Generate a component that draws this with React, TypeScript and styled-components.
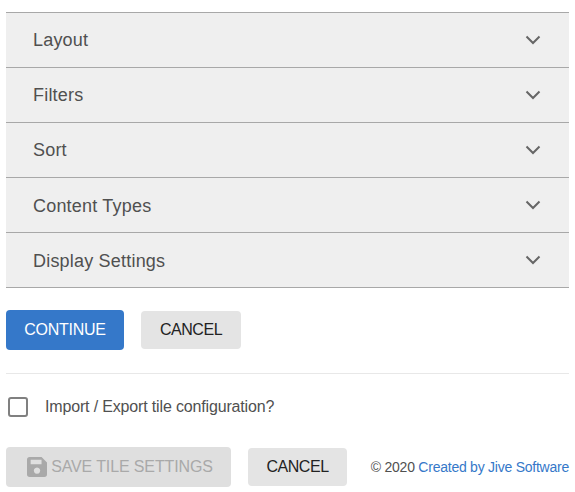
import React from "react";
import styled, { createGlobalStyle } from "styled-components";

const Global = createGlobalStyle`
  html, body { margin: 0; padding: 0; background: #fff; }
  body { font-family: "Liberation Sans", Arial, sans-serif; }
`;

const Page = styled.div`
  width: 563px;
  padding: 12px 6px 0;
`;

const Accordion = styled.div`
  display: flex;
  flex-direction: column;
  border-top: 1px solid #a8a8a8;
`;

const Row = styled.div<{ $low?: boolean }>`
  height: 55px;
  box-sizing: border-box;
  border-bottom: 1px solid #a8a8a8;
  background: #efefef;
  display: flex;
  align-items: center;
  justify-content: space-between;
  padding: ${(p) => (p.$low ? "2px" : "0")} 28px 0 27px;
  font-size: 18px;
  letter-spacing: 0.2px;
  color: #505050;
`;

const Chevron = styled.svg<{ $low?: boolean }>`
  width: 16px;
  height: 10px;
  margin-top: ${(p) => (p.$low ? "-2px" : "0")};
  fill: none;
  stroke: #666;
  stroke-width: 2;
`;

const Actions = styled.div`
  display: flex;
  align-items: center;
  gap: 17px;
  margin-top: 22px;
  padding-bottom: 23px;
  border-bottom: 1px solid #e8e8e8;
`;

const Button = styled.button`
  box-sizing: border-box;
  border: none;
  border-radius: 4px;
  padding: 0;
  font-family: inherit;
  font-size: 16px;
  display: flex;
  align-items: center;
  justify-content: center;
`;

const Primary = styled(Button)`
  width: 118px;
  height: 40px;
  background: #3578c9;
  color: #fff;
  letter-spacing: -0.25px;
`;

const Secondary = styled(Button)<{ $width: number }>`
  width: ${(p) => p.$width}px;
  height: 38px;
  background: #e4e4e4;
  color: #222;
  letter-spacing: -0.45px;
`;

const Disabled = styled(Button)`
  width: 225px;
  height: 40px;
  gap: 4px;
  padding-left: 3px;
  background: #dfdfdf;
  color: #a9a9a9;
  letter-spacing: -0.12px;
`;

const CheckRow = styled.label`
  display: flex;
  align-items: center;
  gap: 17px;
  margin-top: 23px;
  padding-left: 2px;
  font-size: 16px;
  letter-spacing: -0.16px;
  color: #505050;
`;

const Box = styled.span`
  box-sizing: border-box;
  width: 20px;
  height: 20px;
  border: 2.5px solid #808080;
  border-radius: 3px;
`;

const Footer = styled.div`
  display: flex;
  align-items: center;
  margin-top: 30px;
`;

const FooterCancel = styled(Secondary)`
  margin-left: 17px;
`;

const Copy = styled.div`
  margin-left: auto;
  font-size: 14px;
  letter-spacing: -0.24px;
  color: #505050;
  white-space: nowrap;
`;

const Link = styled.a`
  color: #3578c9;
  text-decoration: none;
`;

const SaveIcon = styled.svg`
  width: 20px;
  height: 20px;
  fill: #a9a9a9;
`;

const items = ["Layout", "Filters", "Sort", "Content Types", "Display Settings"];

export default function App() {
  return (
    <Page>
      <Global />
      <Accordion>
        {items.map((t, i) => (
          <Row key={t} $low={i > 2}>
            <span>{t}</span>
            <Chevron viewBox="0 0 16 10" $low={i > 2}>
              <path d="M1.5 1.5 L8 8 L14.5 1.5" />
            </Chevron>
          </Row>
        ))}
      </Accordion>
      <Actions>
        <Primary>CONTINUE</Primary>
        <Secondary $width={100}>CANCEL</Secondary>
      </Actions>
      <CheckRow>
        <Box />
        Import / Export tile configuration?
      </CheckRow>
      <Footer>
        <Disabled>
          <SaveIcon viewBox="0 0 22 22">
            <path fillRule="evenodd" d="M3 0 H16 L22 6 V19 a3 3 0 0 1 -3 3 H3 a3 3 0 0 1 -3 -3 V3 a3 3 0 0 1 3 -3 Z M4 3 V8 H16 V3 Z M11 11.5 a3.5 3.5 0 1 0 0.01 0 Z" />
          </SaveIcon>
          SAVE TILE SETTINGS
        </Disabled>
        <FooterCancel $width={99}>CANCEL</FooterCancel>
        <Copy>
          © 2020 <Link href="#">Created by Jive Software</Link>
        </Copy>
      </Footer>
    </Page>
  );
}
